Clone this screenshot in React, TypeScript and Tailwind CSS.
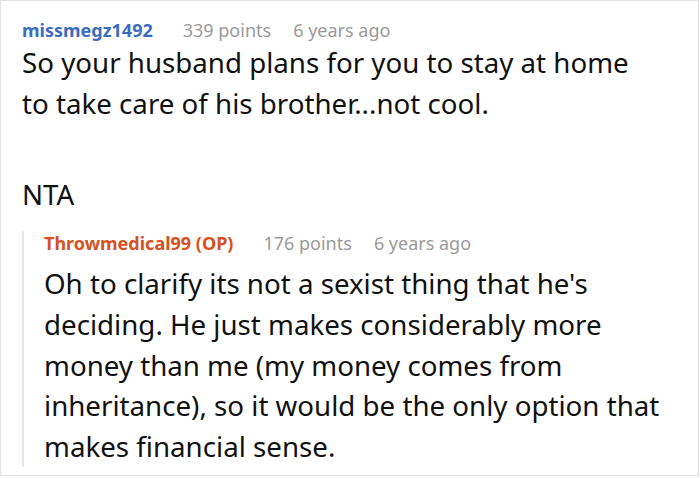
import React from "react";

const font = { fontFamily: '"Noto Sans", "Open Sans", sans-serif' };

const Meta = ({ name, nameClass, points, age }: { name: string; nameClass: string; points: string; age: string }) => (
    <div className="flex items-baseline text-[18px] leading-[24px]">
        <span className={`font-bold ${nameClass}`}>{name}</span>
        <span className="ml-[30px] text-[#9a9a9a]">{points}</span>
        <span className="ml-[22px] text-[#9a9a9a]">{age}</span>
    </div>
)

export default function App() {
    return (
        <div style={font} className="w-[700px] h-[478px] bg-white">
            <div className="w-[699px] h-[476px] border border-[#e3e3e3] pl-[21px] pt-[17px] overflow-hidden">
                <Meta name="missmegz1492" nameClass="text-[#3b6cc0]" points="339 points" age="6 years ago" />
                <div className="text-[27.7px] leading-[41px] text-[#111111]">
                    <p>So your husband plans for you to stay at home<br />to take care of his brother...not cool.</p>
                    <p className="mt-[50px]">NTA</p>
                </div>

                <div className="mt-[27px] border-l-2 border-[#e6e6e6] pl-[20px]">
                    <div className="mt-[-11px]">
                        <Meta name="Throwmedical99 (OP)" nameClass="text-[#d9501e]" points="176 points" age="6 years ago" />
                    </div>
                    <p className="mt-[8px] mb-[-7px] text-[27.7px] leading-[40.8px] text-[#111111]">
                        Oh to clarify its not a sexist thing that he's<br />
                        deciding. He just makes considerably more<br />
                        money than me (my money comes from<br />
                        inheritance), so it would be the only option that<br />
                        makes financial sense.
                    </p>
                </div>
            </div>
        </div>
    )
}
